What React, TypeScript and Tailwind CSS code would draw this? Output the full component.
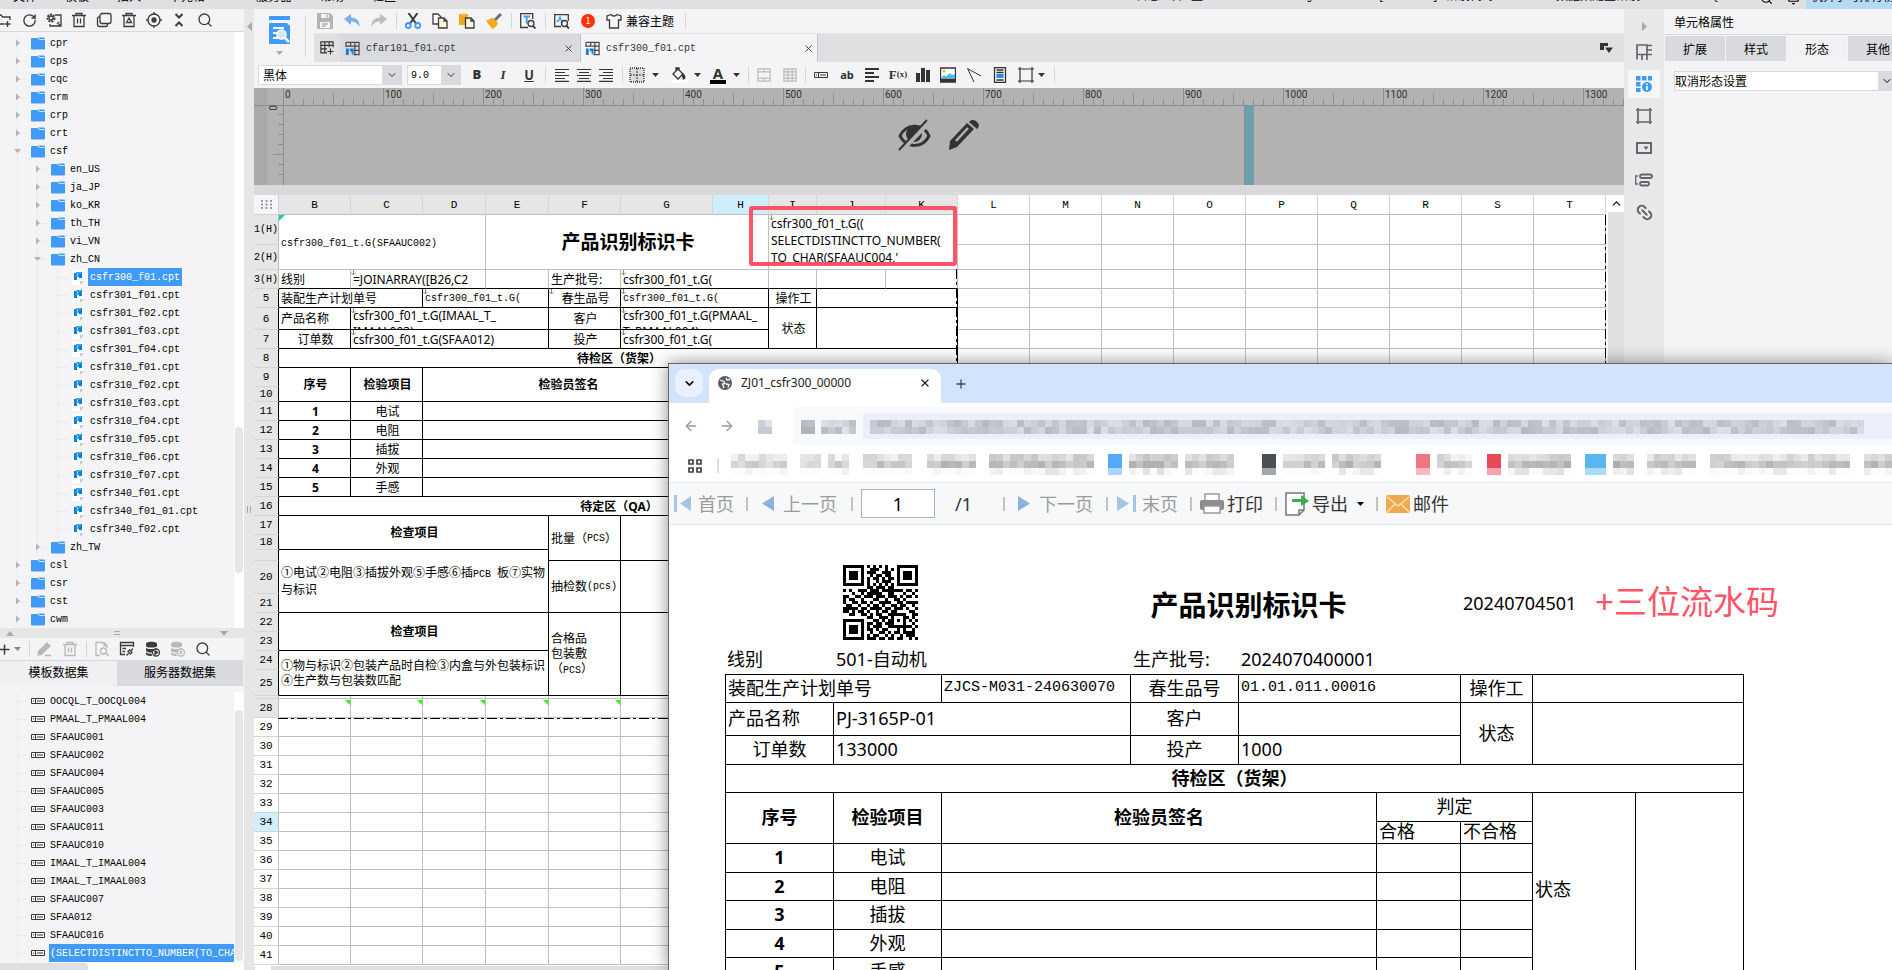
import React from 'react';
import {
  ArrowLeft,
  ArrowRight,
  Bell,
  ChevronDown,
  ChevronUp,
  Link2,
  Plus,
  RotateCw,
  Scissors,
  Search,
  Shirt,
  X,
} from 'lucide-react';

const MONO = "font-['Liberation_Mono','Noto_Sans_CJK_SC',monospace]";
const SANS = "font-['Noto_Sans','Noto_Sans_CJK_SC',sans-serif]";

interface IconProps {
  size?: number;
  box?: string;
  className?: string;
  children: React.ReactNode;
}

const Icon: React.FC<IconProps> = ({ size = 16, box = '0 0 16 16', className = '', children }) => (
  <svg width={size} height={size} viewBox={box} fill="none" stroke="currentColor" strokeWidth="1.3" className={`shrink-0 ${className}`}>
    {children}
  </svg>
);

const Tool: React.FC<{ label: string; className?: string; children: React.ReactNode }> = ({ label, className = '', children }) => (
  <button type="button" aria-label={label} className={`flex shrink-0 items-center justify-center ${className}`}>
    {children}
  </button>
);

const Caret: React.FC<{ className?: string }> = ({ className = '' }) => (
  <svg width="7" height="4" viewBox="0 0 7 4" className={`shrink-0 ${className}`}>
    <path d="M0 0h7L3.5 4z" fill="currentColor" />
  </svg>
);

const Sep: React.FC<{ className?: string }> = ({ className = '' }) => <span className={`w-px shrink-0 bg-[#d5d5d8] ${className}`} />;

/* ---------- left: template tree ---------- */

interface TreeNode {
  name: string;
  level: number;
  open?: boolean;
}

const files = [
  'csfr300_f01', 'csfr301_f01', 'csfr301_f02', 'csfr301_f03', 'csfr301_f04', 'csfr310_f01', 'csfr310_f02', 'csfr310_f03',
  'csfr310_f04', 'csfr310_f05', 'csfr310_f06', 'csfr310_f07', 'csfr340_f01', 'csfr340_f01_01', 'csfr340_f02',
];

const tree: TreeNode[] = [
  ...['cpr', 'cps', 'cqc', 'crm', 'crp', 'crt'].map(name => ({ name, level: 1 })),
  { name: 'csf', level: 1, open: true },
  ...['en_US', 'ja_JP', 'ko_KR', 'th_TH', 'vi_VN'].map(name => ({ name, level: 2 })),
  { name: 'zh_CN', level: 2, open: true },
  ...files.map(f => ({ name: `${f}.cpt`, level: 3 })),
  { name: 'zh_TW', level: 2 },
  ...['csl', 'csr', 'cst', 'cwm'].map(name => ({ name, level: 1 })),
];

const fields = [
  'OOCQL_T_OOCQL004', 'PMAAL_T_PMAAL004', 'SFAAUC001', 'SFAAUC002', 'SFAAUC004', 'SFAAUC005', 'SFAAUC003', 'SFAAUC011',
  'SFAAUC010', 'IMAAL_T_IMAAL004', 'IMAAL_T_IMAAL003', 'SFAAUC007', 'SFAA012', 'SFAAUC016', '(SELECTDISTINCTTO_NUMBER(TO_CHAR',
];

const Guide: React.FC<{ kind: 'line' | 'leaf' | 'closed' | 'open' }> = ({ kind }) => (
  <svg width="20" height="18" viewBox="0 0 20 18" className="shrink-0">
    <path d={kind === 'line' ? 'M6.500 0v18' : 'M6.500 0v18M7 9.500h9'} stroke="#ebebee" />
    {kind === 'closed' && <path d="M5 5.500v7l4-3.500z" fill="#b4b4b4" />}
    {kind === 'open' && <path d="M3 7h7l-3.500 4z" fill="#b4b4b4" />}
  </svg>
);

const Folder = () => (
  <svg width="14" height="13" viewBox="0 0 14 13" className="shrink-0">
    <path d="M1 1h5.500l1.500 2h6v8.500a1 1 0 0 1-1 1H1a1 1 0 0 1-1-1V2a1 1 0 0 1 1-1z" fill="#409bf8" />
    <path d="M7 .5h6a1 1 0 0 1 1 1V3H8z" fill="#409bf8" />
    <path d="M7.500 1l1.200 1.500H14" stroke="#e6f1fd" strokeWidth=".8" fill="none" />
  </svg>
);

const FileIcon = () => (
  <svg width="12" height="15" viewBox="0 0 12 15" className="shrink-0">
    <path d="M0 0h12v11l-4 4H0z" fill="#fff" />
    <path d="M12 11H8v4z" fill="#c9c9cc" />
    <path d="M2 3h3v7H2zM6 2h4v6H7V6H6z" fill="#0a7fe0" />
    <path d="M4 2h5v2H4zM4 5h3v2H4z" fill="#35a8ee" />
  </svg>
);

const FieldIcon = () => (
  <svg width="14" height="6" viewBox="0 0 14 6" className="shrink-0">
    <path d="M.5.5h13v5H.5zM4.500.5v5M6 3h6M2 3h1" stroke="#3a3a3a" fill="none" />
  </svg>
);

const TreeRow: React.FC<{ node: TreeNode }> = ({ node }) => {
  const selected = node.name === 'csfr300_f01.cpt';
  return (
    <li className="flex h-[18px] items-center pl-[11px]">
      {node.level > 1 && <Guide kind="line" />}
      {node.level > 2 && <Guide kind="line" />}
      <Guide kind={node.level === 3 ? 'leaf' : node.open ? 'open' : 'closed'} />
      {node.level === 3 ? <span className="ml-px"><FileIcon /></span> : <Folder />}
      <span className={`h-[18px] whitespace-nowrap px-[2px] leading-5 ${node.level === 3 ? 'ml-1' : 'ml-[3px]'} ${selected ? 'bg-[#409bf8] text-white' : 'text-black'}`}>
        {node.name}
      </span>
    </li>
  );
};

const LeftPanel = () => (
  <aside className={`flex w-[244px] shrink-0 flex-col overflow-hidden bg-[#f4f4f7] text-[10px] ${MONO}`}>
    <div className="flex h-[23px] shrink-0 items-center gap-[9px] border-b border-[#d9d9dc] text-[#3c3c3c]">
      <Tool label="新建文件夹" className="-ml-1 w-4"><Icon><path d="M1 3h4l1.500 2H14v3M1 3v9h7M11.500 9v6M8.500 12h6" /></Icon></Tool>
      <Tool label="刷新" className="w-4"><RotateCw size={15} strokeWidth={2.2} /></Tool>
      <Tool label="设置" className="w-4">
        <Icon><path d="M9 3h6v11H4v-2M11 12l2-2M12 14l2-2" /><circle cx="5" cy="6" r="3.500" strokeDasharray="2 1" strokeWidth="2" /><circle cx="5" cy="6" r="2" /></Icon>
      </Tool>
      <Tool label="删除" className="w-4"><Icon><path d="M1 3.500h14M5 3V1.500h6V3M3 3.500v11h10v-11M6.500 6.500v5M9.500 6.500v5" /></Icon></Tool>
      <Tool label="复制" className="w-4"><Icon><rect x="4" y="1.500" width="11" height="10" rx="2" /><path d="M4 5H3a1.500 1.500 0 0 0-1.500 1.500v6A2 2 0 0 0 3.500 14.500h6a2 2 0 0 0 2-2v-1" /></Icon></Tool>
      <Tool label="回收站" className="w-4"><Icon><path d="M1 3.500h14M5 3V1.500h6V3M3 3.500v11h10v-11M8 6l2.500 4.500h-5z" /></Icon></Tool>
      <Tool label="定位" className="w-4"><Icon><circle cx="8" cy="8" r="6" /><circle cx="8" cy="8" r="2" fill="currentColor" /><path d="M8 0v2.500M8 13.500V16M0 8h2.500M13.500 8H16" /></Icon></Tool>
      <Tool label="折叠" className="w-4"><Icon><path d="M4.500 2L8 5.500 11.500 2M4.500 14L8 10.500l3.500 3.500" strokeWidth="2" /></Icon></Tool>
      <Tool label="搜索" className="ml-px w-4"><Search size={16} strokeWidth={2} /></Tool>
    </div>

    <div className="flex h-[596px] shrink-0">
      <ul className="min-w-0 flex-1 pt-[2px]">
        {tree.map(n => <TreeRow key={n.name} node={n} />)}
      </ul>
      <div className="w-[10px] bg-white px-px pt-[395px]"><div className="h-[146px] rounded bg-[#e6e6e6]" /></div>
    </div>

    <div className="flex h-[10px] shrink-0 items-center justify-between bg-[#e6e6e6] px-[6px] text-[#ababab]">
      <svg width="8" height="5" viewBox="0 0 8 5"><path d="M0 5h8L4 0z" fill="currentColor" /></svg>
      <svg width="6" height="4" viewBox="0 0 6 4"><path d="M0 .5h6M0 3.500h6" stroke="currentColor" /></svg>
      <svg width="8" height="5" viewBox="0 0 8 5" className="mr-[10px]"><path d="M0 0h8L4 5z" fill="currentColor" /></svg>
    </div>

    <div className="flex h-[23px] shrink-0 items-center border-b border-[#d9d9dc] text-[#3c3c3c]">
      <Tool label="新增" className="w-[21px] gap-[2px]"><Plus size={15} strokeWidth={2.4} className="-ml-1 shrink-0" /><Caret className="text-[#8a8a8a]" /></Tool>
      <Sep className="ml-2 mr-[7px] h-4" />
      <Tool label="编辑" className="w-4 text-[#b9b9b9]"><Icon><path d="M1.500 10.500L10 2l3 3-8.500 8.500-3.500.5zM8 14.500h6" fill="currentColor" /></Icon></Tool>
      <Tool label="删除数据集" className="ml-[9px] w-4 text-[#b9b9b9]"><Icon><path d="M1 3.500h14M5 3V1.500h6V3M3 3.500v11h10v-11M6.500 6.500v5M9.500 6.500v5" /></Icon></Tool>
      <Sep className="ml-2 mr-[7px] h-4" />
      <Tool label="预览" className="w-4 text-[#b9b9b9]"><Icon><path d="M6 14.500H2v-13h8l3 3V7M10 1.500v3h3" /><circle cx="9.500" cy="10" r="3" /><path d="M11.500 12l3 3" /></Icon></Tool>
      <Tool label="连接" className="ml-[9px] w-4"><Icon><path d="M6 13.500H1.500v-12h13V6M1.500 4.500h13M3.500 7.500H7M3.500 10.500H6" /><path d="M7.500 14.500l2-2M9 10.500l2.500 2.500 1.500-1.500-2.500-2.500zM12 9.500l2-2" /></Icon></Tool>
      <Tool label="数据源" className="ml-[10px] w-4"><Icon><path d="M1 3c0-3 11-3 11 0v2c0 2-11 2-11 0zM1 6.500c0 2 11 2 11 0V8L7 11.500c-3 0-6-.5-6-2zM1 11c0 1 3 2 5.500 1.500L7 15c-3 0-6-.5-6-2z" fill="currentColor" stroke="none" /><circle cx="11" cy="11.500" r="3.500" fill="#f4f4f7" /><path d="M10 9.800v3.400l2.500-1.700z" fill="currentColor" /></Icon></Tool>
      <Tool label="移除数据源" className="ml-[9px] w-4 text-[#b9b9b9]"><Icon><path d="M1 3c0-3 11-3 11 0v2c0 2-11 2-11 0zM1 6.500c0 2 11 2 11 0V8L7 11.500c-3 0-6-.5-6-2zM1 11c0 1 3 2 5.500 1.500L7 15c-3 0-6-.5-6-2z" fill="currentColor" stroke="none" /><circle cx="11" cy="11.500" r="3.500" fill="#f4f4f7" /><path d="M9.800 10.300l2.400 2.400M12.200 10.300l-2.400 2.400" /></Icon></Tool>
      <Tool label="搜索数据集" className="ml-[9px] w-4"><Search size={16} strokeWidth={2} /></Tool>
    </div>

    <div className="flex h-[25px] shrink-0 text-xs text-black">
      <button type="button" className="w-[117px] bg-[#f0f0f2]">模板数据集</button>
      <button type="button" className="flex-1 border-r border-[#f4f4f7] bg-[#d9dade]">服务器数据集</button>
    </div>

    <div className="mt-[6px] flex h-[270px] shrink-0">
      <ul className="min-w-0 flex-1 overflow-hidden">
        {fields.map((f, i) => (
          <li key={f} className="flex h-[18px] items-center pl-[11px]">
            <Guide kind="leaf" />
            <FieldIcon />
            <span className={`ml-1 h-[18px] whitespace-nowrap pl-px leading-5 ${i === fields.length - 1 ? 'bg-[#409bf8] pl-[3px] text-white' : 'text-black'}`}>{f}</span>
          </li>
        ))}
      </ul>
      <div className="w-[10px] bg-white px-px pt-[18px]"><div className="h-[251px] rounded bg-[#e6e6e6]" /></div>
    </div>
    <div className="mt-px flex-1 bg-white"><div className="h-full w-[88px] rounded-tr bg-[#e0e0e2]" /></div>
  </aside>
);

/* ---------- centre: toolbars ---------- */

const TabIcon = () => (
  <Icon size={15} className="text-[#4a4a4a]">
    <path d="M1 1.500h14v13H9M1 1.500v5M6 1.500v4M10.500 1.500v13M1 5.500h14M8 10h7" />
    <path d="M1 8h3v7H1zM5 8h4v6H7v-3H5z" fill="#1a7fd0" stroke="none" />
  </Icon>
);

const MainToolbar = () => (
  <div className="flex h-[25px] items-center gap-[11px] border-b border-[#e4e4e6] pl-[3px] text-[#3c3c3c]">
    <Tool label="保存" className="w-4"><Icon className="text-[#b4b4b4]"><path d="M0 0h13l3 3v13H0z" fill="currentColor" stroke="none" /><path d="M4 1h8v4H4zM3 9h10v6H3z" fill="#f4f4f7" stroke="none" /><path d="M10 1.500v3M5 11h6M5 13h4" strokeWidth="1.500" /></Icon></Tool>
    <Tool label="撤销" className="w-4"><Icon><path d="M0 6l7-5v3.500c5 0 9 3 8.500 9.500C14 10.500 11 8.500 7 8.500V12z" fill="#77b1ee" stroke="none" /></Icon></Tool>
    <Tool label="重做" className="w-4"><Icon><path d="M16 6L9 1v3.500C4 4.500 0 7.500.5 14 2 10.500 5 8.500 9 8.500V12z" fill="#bdbdbd" stroke="none" /></Icon></Tool>
    <Sep className="-ml-[2px] -mr-[3px] h-4" />
    <Tool label="剪切" className="w-4"><Icon><path d="M3.500 0L11 10.500M12.500 0L5 10.500" strokeWidth="2" /><circle cx="3.200" cy="12.500" r="2.500" stroke="#409bf8" strokeWidth="1.800" /><circle cx="12.800" cy="12.500" r="2.500" stroke="#409bf8" strokeWidth="1.800" /></Icon></Tool>
    <Tool label="复制" className="w-4"><Icon><path d="M1 1h5l3 3v7H1z" fill="#fff" /><path d="M6.500 5H12l3 3v7H6.500z" fill="#fdf5dc" /><path d="M12 5v3h3" /></Icon></Tool>
    <Tool label="粘贴" className="w-4"><Icon><path d="M0 1h9v11H0z" fill="#f0a91b" stroke="none" /><path d="M2.500 0h4v2h-4z" fill="#f5d48a" stroke="none" /><path d="M6.500 5H12l3 3v7H6.500z" fill="#fdf5dc" /><path d="M12 5v3h3" /></Icon></Tool>
    <Tool label="格式刷" className="w-4"><Icon><path d="M0 7c3 1 4-2 7-2l5 5c-1 3-3 5-6 6-1-3-4-4-6-9z" fill="#f5ab17" stroke="none" /><path d="M9 7l6-6" stroke="#6e7078" strokeWidth="3" /></Icon></Tool>
    <Sep className="-ml-[2px] -mr-[3px] h-4" />
    <Tool label="查找" className="w-4"><Icon><path d="M8 14.500H.7V.7h12V6" /><path d="M3.500 3.500h6.500M6.700 3.500v7" stroke="#409bf8" strokeWidth="1.800" /><circle cx="11" cy="10.500" r="3" /><path d="M13 13l2.500 2.500" strokeWidth="1.800" /></Icon></Tool>
    <Sep className="-ml-[2px] -mr-[3px] h-4" />
    <Tool label="性能检测" className="w-4"><Icon><path d="M7 13.500H.7V1.700h13.600V8" /><path d="M2.500 8h2l1.500-4 2 6 1.500-3" stroke="#409bf8" /><circle cx="10.500" cy="10.500" r="3" /><path d="M12.500 13l2.500 2.500" strokeWidth="1.800" /></Icon></Tool>
    <span className="flex h-[14px] w-[14px] items-center justify-center rounded-full bg-[#ff3300] text-[9px] text-white">1</span>
    <button type="button" className="flex items-center gap-1 text-xs text-black">
      <Icon className="text-[#3c3c3c]"><path d="M5 1.500L1 3v4h2.500v8h9V7H15V3l-4-1.500c-1 2-5 2-6 0z" /></Icon>兼容主题
    </button>
    <Sep className="h-4" />
  </div>
);

const TabBar = () => (
  <div className={`flex h-7 items-stretch bg-[#e0e0e2] text-[10px] text-[#333] ${MONO}`}>
    <Tool label="新建模板" className="w-[26px]"><Icon size={14}><path d="M8 13.500H1V1h14v6M1 5h14M1 9h7M5.500 1v12.500M10.500 1v6M12 8.500v7M8.500 12h7" /></Icon></Tool>
    <div className="flex w-[241px] items-center border-r border-[#c4c4c8] bg-[#d9dade] pl-[5px] pr-[6px]">
      <TabIcon /><span className="ml-[6px] flex-1">cfar101_f01.cpt</span><Tool label="关闭"><X size={11} strokeWidth={2} /></Tool>
    </div>
    <div className="flex w-[237px] items-center border-r border-[#c4c4c8] bg-[#f4f4f7] pl-1 pr-[3px]">
      <TabIcon /><span className="ml-[6px] flex-1">csfr300_f01.cpt</span><Tool label="关闭"><X size={11} strokeWidth={2} /></Tool>
    </div>
    <div className="flex flex-1 items-center justify-end pr-[11px]">
      <Tool label="标签列表"><svg width="13" height="11" viewBox="0 0 13 11"><path d="M0 0h8v3H4v4H0z" fill="#333" /><path d="M5 4.500h8L9 10z" fill="#333" /></svg></Tool>
    </div>
  </div>
);

const AlignIcon: React.FC<{ d: string }> = ({ d }) => <Icon size={14} box="0 0 14 14"><path d={d} strokeWidth="1.200" /></Icon>;

const FormatBar = () => (
  <div className="flex h-[26px] items-center bg-[#f4f4f7] pl-1 text-[#333]">
    <label className="relative flex h-5 w-[144px] shrink-0 border border-[#d9dade] bg-white">
      <select aria-label="字体" className="w-full appearance-none pl-1 text-xs text-black"><option>黑体</option></select>
      <span className="pointer-events-none absolute inset-y-0 right-0 flex w-[19px] items-center justify-center bg-[#d9dade]"><ChevronDown size={12} /></span>
    </label>
    <label className="relative ml-[5px] flex h-5 w-[54px] shrink-0 border border-[#d9dade] bg-white">
      <select aria-label="字号" className={`w-full appearance-none pl-[3px] text-[10px] text-black ${MONO}`}><option>9.0</option></select>
      <span className="pointer-events-none absolute inset-y-0 right-0 flex w-[19px] items-center justify-center bg-[#d9dade]"><ChevronDown size={12} /></span>
    </label>
    <Tool label="加粗" className="ml-2 w-4 text-[13px] font-black"><b className={SANS}>B</b></Tool>
    <Tool label="斜体" className="ml-[10px] w-4 font-['Liberation_Serif',serif] text-[13px]"><b><i>I</i></b></Tool>
    <Tool label="下划线" className="ml-[10px] w-4 text-[13px]"><b className="underline">U</b></Tool>
    <Sep className="ml-2 mr-[9px] h-4" />
    <Tool label="左对齐"><AlignIcon d="M0 1.500h14M0 4.500h10M0 7.500h14M0 10.500h10M0 13.400h14" /></Tool>
    <Tool label="居中" className="ml-2"><AlignIcon d="M0 1.500h14M2 4.500h10M0 7.500h14M2 10.500h10M0 13.400h14" /></Tool>
    <Tool label="右对齐" className="ml-2"><AlignIcon d="M0 1.500h14M4 4.500h10M0 7.500h14M4 10.500h10M0 13.400h14" /></Tool>
    <Sep className="ml-[9px] mr-[6px] h-4" />
    <Tool label="边框" className="gap-[7px]"><Icon><path d="M1 1h14v14H1z" fill="#dcdcde" strokeDasharray="1 1" /><path d="M8 1v14M1 8h14" strokeDasharray="2 1" strokeWidth="1" /></Icon><Caret /></Tool>
    <Tool label="填充" className="ml-3 gap-[7px]"><Icon><path d="M2 7l5-5 5 5-5 5zM5 4V1h3v3" /><path d="M12 7c2 2 2.500 3 1.500 4.500S11 10 12 7z" fill="currentColor" /><path d="M0 13h16v3H0z" fill="#fff" stroke="none" /></Icon><Caret /></Tool>
    <Tool label="字色" className="ml-[9px] gap-[7px]"><span className={`flex w-4 flex-col items-center border-b-4 border-black text-[15px] font-bold leading-[13px] ${SANS}`}>A</span><Caret /></Tool>
    <Sep className="ml-2 mr-2 h-4" />
    <Tool label="合并" className="text-[#b9b9b9]"><Icon size={14}><path d="M1 1h14v14H1zM1 4.500h14M1 11.500h14M8 1v3M8 12v3" /></Icon></Tool>
    <Tool label="拆分" className="ml-3 text-[#b9b9b9]"><Icon size={14}><path d="M1 1h14v14H1zM1 4.500h14M1 8h14M1 11.500h14M5.500 1v14M10.500 1v14" /></Icon></Tool>
    <Sep className="ml-2 mr-2 h-4" />
    <Tool label="数据列"><FieldIcon /></Tool>
    <Tool label="文本" className={`ml-[11px] w-4 text-[11px] font-bold ${SANS}`}>ab</Tool>
    <Tool label="富文本" className="ml-[9px]"><Icon><path d="M1 2h14M1 6h9M1 10h14M1 14h9" strokeWidth="1.800" /></Icon></Tool>
    <Tool label="公式" className="ml-[9px] w-[18px] font-['Liberation_Serif',serif] text-[13px] font-bold">F<span className="text-[9px]">(x)</span></Tool>
    <Tool label="图表" className="ml-[8px]"><Icon><path d="M1 6h4v9H1zM6 1h4v14H6zM11 3h4v12h-4z" fill="currentColor" stroke="none" /></Icon></Tool>
    <Tool label="图片" className="ml-[9px]"><Icon><path d="M.5 1h15v14H.5z" fill="#fff" /><path d="M1 11l3-3 2 1.500L10 6l2 2 3-1v4z" fill="#3cc0f5" stroke="none" /><path d="M.5 11.500h15V15H.5z" fill="#333" stroke="none" /><circle cx="4" cy="4" r="1.500" fill="#f5b52a" stroke="none" /></Icon></Tool>
    <Tool label="斜线" className="ml-[10px]"><Icon><path d="M1.500 1.500L8 15M1.500 1.500L15 9" strokeWidth="1" /></Icon></Tool>
    <Tool label="子报表" className="ml-[10px]"><Icon><path d="M2.500.7h11v14.600h-11zM4.500 3h7M4.500 5.500h7M4.500 13h7" /><path d="M4.500 7h7v4h-7z" fill="#2a8ce0" stroke="none" /></Icon></Tool>
    <Tool label="悬浮元素" className="ml-[10px] gap-1"><Icon><path d="M2 2h12v12H2zM0 2h2V0M14 0v2h2M16 14h-2v2M2 16v-2H0" strokeWidth="1.200" /></Icon><Caret /></Tool>
    <Sep className="ml-[9px] h-4" />
  </div>
);

const RulerArea = () => {
  const ticks = Array.from({ length: 180 }, (_, i) => i);
  return (
    <div className="relative h-[97px] overflow-hidden bg-[#b2b2b2] text-[#333]">
      <svg width="100%" height="97" className="block" fontFamily="Roboto, sans-serif" fontSize="10">
        <rect x="0" y="0" width="13" height="97" fill="#a9a9a9" />
        <path d="M0 17.500h3000M29.500 0v97" stroke="#8c8c8c" />
        {ticks.map(i => (
          <line key={i} x1={29.5 + i * 10} x2={29.5 + i * 10} y1={i % 10 === 0 ? 0 : i % 5 === 0 ? 5 : 11} y2="17" stroke="#8f8f8f" />
        ))}
        {ticks.filter(i => i % 10 === 0).map(i => (
          <text key={i} x={31 + i * 10} y="10" fill="#333">{i * 10}</text>
        ))}
        {[1, 2, 3, 4, 5, 6, 7].map(i => (
          <line key={i} x1={i === 5 ? 19 : 24} x2="29" y1={16.5 + i * 10} y2={16.5 + i * 10} stroke="#8f8f8f" />
        ))}
        <text transform="translate(15 17) rotate(90)" fill="#333">0</text>
        <path d="M990.500 18v79" stroke="#8c8c8c" />
        <rect x="991" y="17" width="9" height="80" fill="#6e9fab" />
        <g transform="translate(644 32)">
          <path d="M2 16c5-12 23-14 29 0-6 12-22 13-29 0z" stroke="#333" strokeWidth="3" fill="none" />
          <circle cx="16" cy="14" r="8" fill="#333" />
          <path d="M3 31L32 1" stroke="#b2b2b2" strokeWidth="5" />
          <path d="M1 30L29 0" stroke="#333" strokeWidth="2" />
        </g>
        <g transform="translate(695 32)">
          <path d="M0 30l1-9L18 3l7 6L8 27z" fill="#333" />
          <path d="M7 21L19 8" stroke="#b2b2b2" strokeWidth="2.500" />
          <path d="M20 2c3-3 6-2 8 0s3 4 0 7z" fill="#333" />
        </g>
      </svg>
    </div>
  );
};

/* ---------- centre: spreadsheet ---------- */

interface Cell {
  t?: React.ReactNode;
  cs?: number;
  rs?: number;
  c?: string;
  mark?: boolean;
}

interface Row {
  n: string;
  h: number;
  cells: Cell[];
}

const K = 'border-black';
const MID = 'border-black justify-center';
const BOLD = 'border-black justify-center font-bold';
const G = 'border-[#bfbfbf]';
const TOP = 'border-b-black border-r-[#bfbfbf]';
const code = (s: string) => <span className={`text-[10px] ${MONO}`}>{s}</span>;

const checks = ['电试', '电阻', '插拔', '外观', '手感'];

const designRows: Row[] = [
  {
    n: '1(H)', h: 30, cells: [
      { t: <span className={`pt-[2px] text-[10px] ${MONO}`}>csfr300_f01_t.G(SFAAUC002)</span>, cs: 3, rs: 2, c: G },
      { t: '产品识别标识卡', cs: 4, rs: 2, c: `${G} justify-center text-[19px] font-bold` },
      { t: <span className="self-start leading-[17px]">csfr300_f01_t.G((<br />SELECTDISTINCTTO_NUMBER(<br />TO_CHAR(SFAAUC004,'</span>, cs: 3, rs: 2, c: G, mark: true },
    ],
  },
  { n: '2(H)', h: 25, cells: [] },
  {
    n: '3(H)', h: 19, cells: [
      { t: '线别', c: TOP },
      { t: '=JOINARRAY([B26,C2', cs: 2, c: TOP, mark: true },
      { c: TOP },
      { t: '生产批号:', c: TOP },
      { t: 'csfr300_f01_t.G(', cs: 2, c: TOP, mark: true },
      { c: TOP }, { c: TOP }, { c: TOP },
    ],
  },
  {
    n: '5', h: 19, cells: [
      { t: '装配生产计划单号', cs: 2, c: K },
      { t: code('csfr300_f01_t.G('), cs: 2, c: K, mark: true },
      { t: '春生品号', c: MID, mark: true },
      { t: code('csfr300_f01_t.G('), cs: 2, c: K, mark: true },
      { t: '操作工', c: MID }, { cs: 2, c: K },
    ],
  },
  {
    n: '6', h: 22, cells: [
      { t: '产品名称', c: K },
      { t: <span className="self-start leading-4">csfr300_f01_t.G(IMAAL_T_<br />IMAAL003)</span>, cs: 3, c: K, mark: true },
      { t: '客户', c: MID },
      { t: <span className="self-start leading-4">csfr300_f01_t.G(PMAAL_<br />T_PMAAL004)</span>, cs: 2, c: K, mark: true },
      { t: '状态', rs: 2, c: MID }, { cs: 2, rs: 2, c: K },
    ],
  },
  {
    n: '7', h: 19, cells: [
      { t: '订单数', c: MID },
      { t: 'csfr300_f01_t.G(SFAA012)', cs: 3, c: K, mark: true },
      { t: '投产', c: MID },
      { t: 'csfr300_f01_t.G(', cs: 2, c: K, mark: true },
    ],
  },
  { n: '8', h: 19, cells: [{ t: '待检区（货架）', cs: 10, c: BOLD }] },
  { n: '9', h: 19, cells: [{ t: '序号', rs: 2, c: BOLD }, { t: '检验项目', rs: 2, c: BOLD }, { t: '检验员签名', cs: 4, rs: 2, c: BOLD }, { cs: 4, rs: 2, c: K }] },
  { n: '10', h: 15, cells: [] },
  ...checks.map((t, i) => ({ n: String(11 + i), h: 19, cells: [{ t: i + 1, c: `${MID} font-bold` }, { t, c: MID }, { cs: 4, c: K }, { cs: 4, c: K }] })),
  { n: '16', h: 19, cells: [{ t: '待定区（QA）', cs: 10, c: BOLD }] },
  { n: '17', h: 19, cells: [{ t: '检查项目', cs: 4, rs: 2, c: BOLD }, { t: <>批量（{code('PCS')}）</>, rs: 3, c: K }, { cs: 5, rs: 3, c: K }] },
  { n: '18', h: 15, cells: [] },
  { n: '', h: 11, cells: [{ t: <span className="leading-[15px]">①电试②电阻③插拔外观⑤手感⑥插{code('PCB ')}板⑦实物与标识</span>, cs: 4, rs: 3, c: K }] },
  { n: '20', h: 33, cells: [{ t: <>抽检数{code('(pcs)')}</>, rs: 2, c: K }, { cs: 5, rs: 2, c: K }] },
  { n: '21', h: 19, cells: [] },
  { n: '22', h: 19, cells: [{ t: '检查项目', cs: 4, rs: 2, c: BOLD }, { t: <span className="leading-[15px]">合格品<br />包装敷<br />（{code('PCS')}）</span>, rs: 4, c: K }, { cs: 5, rs: 4, c: K }] },
  { n: '23', h: 19, cells: [] },
  { n: '24', h: 19, cells: [{ t: <span className="leading-[15px]">①物与标识②包装产品时自检③内盒与外包装标识④生产数与包装数匹配</span>, cs: 4, rs: 2, c: K }] },
  { n: '25', h: 26, cells: [] },
];

const emptyRow = (n: string, h: number): Row => ({ n, h, cells: Array.from({ length: 10 }, () => ({ c: G })) });
const allRows: Row[] = [
  ...designRows,
  emptyRow('gap', 3),
  ...Array.from({ length: 14 }, (_, i) => emptyRow(String(28 + i), 19)),
];

const columns: [string, number][] = [
  ['B', 72], ['C', 72], ['D', 63], ['E', 63], ['F', 72], ['G', 92], ['H', 56], ['I', 48], ['J', 69], ['K', 72],
  ...'LMNOPQRST'.split('').map(l => [l, 72] as [string, number]),
];

const headerTone = (letter: string) => (letter === 'H' ? 'bg-[#cfeefb]' : letter < 'L' ? 'bg-[#e6e6e6]' : 'bg-white');

const Marker = () => (
  <svg width="5" height="6" viewBox="0 0 5 6" className="absolute left-0 top-0"><path d="M2.500 0v5M0 2.500L2.500 5 5 2.500" stroke="#888" fill="none" /></svg>
);

const Sheet = () => (
  <div className="relative min-w-0 flex-1 overflow-hidden bg-white">
    <table className={`w-[1352px] table-fixed border-separate border-spacing-0 text-xs text-black ${SANS}`}>
      <colgroup>
        <col className="w-[25px]" />
        {columns.map(([l, w]) => <col key={l} style={{ width: w }} />)}
      </colgroup>
      <thead>
        <tr className={`h-5 ${MONO}`}>
          <th className="border-b border-r border-b-[#d0d0d4] border-r-[#d0d0d4] bg-[#f6f6fa] p-0">
            <svg width="11" height="9" viewBox="0 0 11 9" className="mx-auto text-[#999]"><path d="M0 1h2M4.500 1h2M9 1h2M0 4.500h2M4.500 4.500h2M9 4.500h2M0 8h2M4.500 8h2M9 8h2" stroke="currentColor" strokeWidth="2" /></svg>
          </th>
          {columns.map(([l]) => (
            <th key={l} className={`border-b border-r border-b-[#bfbfbf] border-r-[#d5d5d9] px-0 pb-0 pt-[2px] text-[11px] font-normal leading-[17px] ${headerTone(l)}`}>{l}</th>
          ))}
        </tr>
      </thead>
      <tbody>
        {allRows.map((row, i) => {
          const num = parseInt(row.n, 10);
          const black = i >= 3 && i < designRows.length;
          return (
            <tr key={row.n + i} style={{ height: row.h }}>
              <th className={`whitespace-nowrap border-b border-r border-b-[#d5d5d9] p-0 text-center font-normal leading-none ${i < 3 ? 'text-[10px]' : 'text-[11px]'} ${MONO} ${black ? 'border-r-black' : 'border-r-[#bfbfbf]'} ${num === 34 ? 'bg-[#cfeefb]' : num > 28 ? 'bg-white' : 'bg-[#e6e6e6]'}`}>
                <div className="flex items-center justify-center overflow-hidden pt-px" style={{ height: row.h - 1 }}>{row.n === 'gap' ? '' : row.n}</div>
              </th>
              {row.cells.map((cell, j) => {
                const h = allRows.slice(i, i + (cell.rs ?? 1)).reduce((sum, r) => sum + r.h, 0);
                const tone = cell.c ?? G;
                return (
                  <td key={j} colSpan={cell.cs} rowSpan={cell.rs} className={`relative border-b border-r p-0 ${tone}`}>
                    {cell.mark && <Marker />}
                    <div className={`flex items-center overflow-hidden pl-[2px] leading-[17px] ${tone}`} style={{ height: h - 1 }}>{cell.t}</div>
                    {num === 28 && <svg width="5" height="5" viewBox="0 0 5 5" className="absolute right-0 top-px"><path d="M0 0h5v5z" fill="#2bf500" /></svg>}
                  </td>
                );
              })}
              {Array.from({ length: 9 }, (_, j) => <td key={`x${j}`} className="border-b border-r border-[#bfbfbf] p-0" />)}
            </tr>
          );
        })}
      </tbody>
    </table>
    <div className="mt-px h-[5px] bg-[#e0e0e2] pl-[1px]"><div className="h-full w-4 bg-white" /></div>
    {/* page break guides */}
    <svg className="pointer-events-none absolute left-0 top-0 h-full w-full" fill="none" stroke="#000" strokeDasharray="10 3 3 3">
      <path d="M24 523.500h679M702.500 74v450M1351.500 20v504" />
    </svg>
    <svg width="6" height="6" viewBox="0 0 6 6" className="absolute left-[25px] top-5"><path d="M0 0h6L0 6z" fill="#19d3a2" /></svg>
    <div className="absolute left-[495px] top-[11px] h-[60px] w-[208px] rounded-[3px] border-4 border-[#ff5468]" />
  </div>
);

/* ---------- right: cell attributes ---------- */

const RightPanel = () => (
  <div className="flex w-[268px] shrink-0">
    <nav className="flex w-10 flex-col items-center bg-[#e8e8e8] text-[#62646e]">
      <svg width="5" height="9" viewBox="0 0 5 9" className="mt-[13px]"><path d="M0 0v9l5-4.500z" fill="#a8a8a8" /></svg>
      <Tool label="单元格元素" className="mt-[7px] h-7 w-8"><Icon><path d="M1 15.500V1h10v9.500H1M11 1.500h5M11 6h5M11 10.500h5M6 11v5M11 11v5" strokeWidth="1.700" /></Icon></Tool>
      <Tool label="单元格属性" className="mt-1 h-7 w-8 bg-[#f6f6f9]"><Icon><path d="M0 0h4.500v4.500H0zM6 0h4.500v4.500H6zM12 0h4v4.500h-4zM0 6h4.500v4.500H0zM0 12h4.500v4H0z" fill="#409bf8" stroke="none" /><circle cx="11" cy="11" r="5" fill="#409bf8" stroke="none" /><path d="M11 7.500v1.500M11 10v4" stroke="#fff" strokeWidth="1.600" /></Icon></Tool>
      <Tool label="悬浮元素" className="mt-1 h-7 w-8"><Icon><path d="M2 2h12v12H2zM0 2h2V0M14 0v2h2M16 14h-2v2M2 16v-2H0" strokeWidth="1.700" /></Icon></Tool>
      <Tool label="控件设置" className="mt-1 h-7 w-8"><Icon><rect x="1" y="3" width="14" height="10" strokeWidth="2" /><path d="M7.500 6.500h5l-2.500 3.500z" fill="currentColor" stroke="none" /></Icon></Tool>
      <Tool label="条件属性" className="mt-1 h-7 w-8"><Icon size={18} box="0 0 18 16"><path d="M3 4H.7v8H3" /><rect x="5" y="2.500" width="12" height="3.500" rx="1.700" strokeWidth="1.800" /><rect x="5" y="10" width="9" height="3.500" rx="1.500" strokeWidth="1.800" /></Icon></Tool>
      <Tool label="超级链接" className="mt-1 h-7 w-8"><Link2 size={19} strokeWidth={2.6} className="rotate-45" /></Tool>
    </nav>
    <section className="min-w-0 flex-1 overflow-hidden bg-[#f4f4f7] text-xs text-black">
      <h2 className="h-[26px] border-b border-[#d9d9dc] pl-[10px] leading-[26px]">单元格属性</h2>
      <div className="flex h-[26px] gap-px pl-px pt-px">
        <button type="button" className="w-[60px] shrink-0 bg-[#d9dade]">扩展</button>
        <button type="button" className="w-[60px] shrink-0 bg-[#d9dade]">样式</button>
        <button type="button" className="w-[60px] shrink-0 bg-[#f2f2f4]">形态</button>
        <button type="button" className="w-[60px] shrink-0 bg-[#d9dade]">其他</button>
      </div>
      <label className="relative ml-[10px] mt-[10px] flex h-5 border border-r-0 border-[#d9dade] bg-white">
        <select aria-label="形态" className="w-full appearance-none"><option>取消形态设置</option></select>
        <span className="pointer-events-none absolute inset-y-0 right-0 flex w-[14px] items-center justify-center bg-[#d9dade]"><ChevronDown size={12} className="ml-1 shrink-0" /></span>
      </label>
    </section>
  </div>
);

/* ---------- browser preview window ---------- */

// Blocky censor strip: every segment is [x, width, base grey, optional colour].
type Segment = [number, number, number, string?];

const Mosaic: React.FC<{ segments: Segment[]; rows: number; className?: string; tint?: boolean }> = ({ segments, rows, className = '', tint }) => (
  <svg width="100%" height={rows * 7} className={`block ${className}`}>
    {segments.flatMap(([x, w, base, color], s) =>
      Array.from({ length: Math.round(w / 7) * rows }, (_, k) => {
        const col = Math.floor(k / rows);
        const r = k % rows;
        const seed = Math.abs(Math.sin(x * 12.9 + col * 78.2 + r * 37.7) * 43758.5) % 1;
        const lift = rows === 3 ? [24, 0, 52][r] : 0;
        const g = Math.min(252, Math.round(base + seed * 36 + lift));
        const fill = color ?? (tint ? `rgb(${g},${g + 4},${Math.min(255, g + 12)})` : `rgb(${g},${g},${g})`);
        return <rect key={`${s}-${k}`} x={x + col * 7} y={r * 7} width="7" height="7" fill={fill} opacity={color && r === 2 ? 0.5 : 1} />;
      })
    )}
  </svg>
);

const urlSegments: Segment[] = [[89, 14, 195], [132, 14, 170], [152, 35, 185], [201, 994, 182]];
const bookmarkSegments: Segment[] = [
  [62, 56, 190], [131, 21, 195], [159, 21, 190], [194, 49, 185], [258, 49, 178], [320, 105, 175], [439, 14, 0, '#55a9fb'],
  [460, 49, 168], [516, 49, 175], [593, 14, 0, '#4a4f54'], [614, 42, 180], [663, 49, 175], [747, 14, 0, '#ee7683'], [768, 35, 185],
  [818, 14, 0, '#e84a5a'], [839, 63, 170], [916, 21, 0, '#58b8ee'], [944, 21, 172], [978, 49, 180], [1041, 140, 178], [1195, 28, 175],
];

const PageSep = () => <span className="h-[14px] w-[2px] shrink-0 bg-[#c2c2c4]" />;

const qr = [
  '1111111010101010001111111',
  '1000001001110010101000001',
  '1011101011100111001011101',
  '1011101001011011001011101',
  '1011101010110101101011101',
  '1000001010010111001000001',
  '1111111010101010101111111',
  '0000000011011101100000000',
  '1010011101110111111101101',
  '0001001011111001100010010',
  '1100110111011101110101101',
  '1011001000110010011010000',
  '1001101101001111001101111',
  '0110010010110100110110010',
  '1111101101111011011101001',
  '1101011010010110110000110',
  '0011001101011001111110011',
  '0000000011001110100011010',
  '1111111000110101101010101',
  '1000001011011011100010010',
  '1011101010111001111111101',
  '1011101011010110001010010',
  '1011101001001101011011110',
  '1000001010110010100101110',
  '1111111011101101101100101',
];

const QrCode = () => (
  <svg width="75" height="75" viewBox="0 0 25 25" shapeRendering="crispEdges" className="mx-auto block">
    {qr.flatMap((line, y) => line.split('').map((bit, x) => (bit === '1' ? <rect key={`${x}-${y}`} x={x} y={y} width="1" height="1" /> : null)))}
  </svg>
);

const RC = 'border-b border-r border-black px-[2px] pt-0 pb-[2px]';
const monoCell = `text-[15px] ${MONO}`;

const Report = () => (
  <div className={`relative flex-1 overflow-hidden bg-white pl-[56px] pt-[38px] text-lg leading-6 text-black ${SANS}`}>
    <table className="w-[1019px] table-fixed border-separate border-spacing-0">
      <colgroup>
        {[109, 108, 94, 95, 108, 138, 84, 72, 103, 108].map((w, i) => <col key={i} style={{ width: w }} />)}
      </colgroup>
      <tbody>
        <tr className="h-[83px]">
          <td colSpan={3} className="p-0 pb-1"><QrCode /></td>
          <td colSpan={4} className="p-0 text-center text-[28px] font-bold">产品识别标识卡</td>
          <td colSpan={3} className="whitespace-nowrap px-[2px] pb-1 pt-0">20240704501</td>
        </tr>
        <tr className="h-[29px]">
          <td className="border-b border-black px-[2px] pb-[2px] pt-0">线别</td>
          <td colSpan={3} className="border-b border-black px-[2px] pb-[2px] pt-0">501-自动机</td>
          <td className="whitespace-nowrap border-b border-black px-[2px] pb-[2px] pt-0">生产批号:</td>
          <td colSpan={5} className="border-b border-black px-[2px] pb-[2px] pt-0">2024070400001</td>
        </tr>
        <tr className="h-7">
          <td colSpan={2} className={`border-l ${RC}`}>装配生产计划单号</td>
          <td colSpan={2} className={`${RC} ${monoCell}`}>ZJCS-M031-240630070</td>
          <td className={`${RC} text-center`}>春生品号</td>
          <td colSpan={2} className={`${RC} ${monoCell}`}>01.01.011.00016</td>
          <td className={`${RC} text-center`}>操作工</td>
          <td colSpan={2} className={RC} />
        </tr>
        <tr className="h-[33px]">
          <td className={`border-l ${RC}`}>产品名称</td>
          <td colSpan={3} className={RC}>PJ-3165P-01</td>
          <td className={`${RC} text-center`}>客户</td>
          <td colSpan={2} className={RC} />
          <td rowSpan={2} className={`${RC} text-center`}>状态</td>
          <td rowSpan={2} colSpan={2} className={RC} />
        </tr>
        <tr className="h-[29px]">
          <td className={`border-l ${RC} text-center`}>订单数</td>
          <td colSpan={3} className={RC}>133000</td>
          <td className={`${RC} text-center`}>投产</td>
          <td colSpan={2} className={RC}>1000</td>
        </tr>
        <tr className="h-7">
          <td colSpan={10} className={`border-l ${RC} text-center font-bold`}>待检区（货架）</td>
        </tr>
        <tr className="h-[29px]">
          <th rowSpan={2} className={`border-l ${RC}`}>序号</th>
          <th rowSpan={2} className={RC}>检验项目</th>
          <th rowSpan={2} colSpan={4} className={RC}>检验员签名</th>
          <td colSpan={2} className={`${RC} text-center`}>判定</td>
          <td rowSpan={7} className={RC}>状态</td>
          <td rowSpan={7} className={RC} />
        </tr>
        <tr className="h-[22px] leading-[19px]">
          <td className={RC}>合格</td>
          <td className={RC}>不合格</td>
        </tr>
        {checks.map((t, i) => (
          <tr key={t} className={i % 2 ? 'h-7' : 'h-[29px]'}>
            <th className={`border-l ${RC}`}>{i + 1}</th>
            <td className={`${RC} text-center`}>{t}</td>
            <td colSpan={4} className={RC} />
            <td className={RC} />
            <td className={RC} />
          </tr>
        ))}
      </tbody>
    </table>
    <span className="absolute left-[926px] top-[54px] whitespace-nowrap text-[33px] leading-[46px] text-[#ff5468]">+三位流水码</span>
  </div>
);

const PreviewWindow = () => (
  <section className={`absolute bottom-0 left-[668px] right-0 top-[363px] flex flex-col overflow-hidden border-l border-t border-[#666] bg-white shadow-[0_0_16px_rgba(0,0,0,0.45)] ${SANS}`}>
    <div className="flex h-[39px] shrink-0 items-end bg-[#d3e2fd] pl-[6px]">
      <Tool label="搜索标签页" className="mb-[6px] h-7 w-7 rounded-[10px] bg-[#e9f1fe]"><ChevronDown size={13} strokeWidth={2.8} /></Tool>
      <div className="ml-[6px] flex h-[34px] w-[232px] items-center rounded-t-[10px] bg-white pb-[6px] pl-[9px] pr-[10px] text-[#222]">
        <svg width="14" height="14" viewBox="0 0 14 14"><circle cx="7" cy="7" r="7" fill="#5a5d61" /><path d="M2 4l4 1.500 1 2-2.500.5L6 12M8 2l1 2 3-.5M8 8l3 .5-1 3" stroke="#fff" strokeWidth="1.300" fill="none" /></svg>
        <span className="ml-[9px] flex-1 text-xs">ZJ01_csfr300_00000</span>
        <Tool label="关闭标签页"><X size={12} strokeWidth={2.5} /></Tool>
      </div>
      <Tool label="新建标签页" className="mb-3 ml-[13px] text-[#444]"><Plus size={14} strokeWidth={2.2} /></Tool>
    </div>

    <div className="relative flex h-[46px] shrink-0 items-center pl-[14px] text-[#9a9a9a]">
      <ArrowLeft size={16} className="shrink-0" />
      <ArrowRight size={16} className="ml-5 shrink-0" />
      <div className="ml-[58px] h-[38px] flex-1 bg-[#f8f9fd] py-[6px] pl-[70px]"><div className="h-[26px] bg-[#eaeff9]" /></div>
      <div className="absolute inset-x-0 top-[17px]"><Mosaic segments={urlSegments} rows={2} tint /></div>
    </div>

    <div className="relative flex h-[34px] shrink-0 items-center border-b border-[#e8eaed] pl-[19px] text-[#444]">
      <svg width="14" height="14" viewBox="0 0 14 14" fill="none" stroke="currentColor" strokeWidth="1.700"><path d="M1 1h4v4H1zM9 1h4v4H9zM1 9h4v4H1zM9 9h4v4H9z" /></svg>
      <span className="ml-[15px] h-[15px] w-[2px] bg-[#cfe0fb]" />
      <div className="absolute inset-x-0 top-[5px]"><Mosaic segments={bookmarkSegments} rows={3} /></div>
    </div>

    <div className="flex h-[42px] shrink-0 items-center border-b border-[#e2e5e8] bg-[#f6f8fa] pl-[5px] text-lg text-[#9b9b9b]">
      <button type="button" className="mr-3 flex items-center gap-[6px]"><svg width="18" height="17" viewBox="0 0 18 17"><path d="M0 0h3v17H0zM17 1v15L6 8.500z" fill="#a6c5e6" /></svg>首页</button>
      <PageSep />
      <button type="button" className="mx-[14px] flex items-center gap-[9px]"><svg width="12" height="17" viewBox="0 0 12 17"><path d="M12 1v15L0 8.500z" fill="#8ab3de" /></svg>上一页</button>
      <PageSep />
      <input aria-label="页码" defaultValue="1" className="ml-2 h-[29px] w-[74px] border border-[#a9b0c8] bg-white text-center text-black" />
      <span className="ml-5 mr-7 w-5 text-[#333]">/1</span>
      <PageSep />
      <button type="button" className="mx-[13px] flex items-center gap-[9px]"><svg width="12" height="17" viewBox="0 0 12 17"><path d="M0 1v15l12-7.500z" fill="#8ab3de" /></svg>下一页</button>
      <PageSep />
      <button type="button" className="ml-[9px] mr-3 flex items-center gap-[6px]"><svg width="19" height="17" viewBox="0 0 19 17"><path d="M16 0h3v17h-3zM0 1v15l12-7.500z" fill="#a6c5e6" /></svg>末页</button>
      <PageSep />
      <button type="button" className="ml-2 mr-3 flex items-center gap-[3px] text-[#333]">
        <svg width="24" height="22" viewBox="0 0 24 22"><path d="M5 7V1h14v6" fill="#fff" stroke="#999" strokeWidth="1.500" /><rect x="0" y="7" width="24" height="10" rx="2" fill="#8d8d8d" /><path d="M4 13h16v7H4z" fill="#fff" stroke="#999" strokeWidth="1.500" /></svg>打印
      </button>
      <PageSep />
      <button type="button" className="ml-2 mr-3 flex items-center gap-[3px] text-[#333]">
        <svg width="24" height="24" viewBox="0 0 24 24"><path d="M1 1h18v17l-5 5H1z" fill="#fff" stroke="#777" strokeWidth="1.500" /><path d="M19 18h-5v5" fill="none" stroke="#777" strokeWidth="1.500" /><path d="M7 7h9V3l8 6-8 5v-4H7z" fill="#3cae4f" /></svg>导出
        <Caret className="ml-[6px] text-black" />
      </button>
      <PageSep />
      <button type="button" className="ml-2 flex items-center gap-[3px] text-[#333]">
        <svg width="24" height="18" viewBox="0 0 24 18"><rect width="24" height="18" rx="2" fill="#edaa4e" /><path d="M1 2l11 9L23 2M1 17l8-8M23 17l-8-8" stroke="#fbe6c6" strokeWidth="1.300" fill="none" /></svg>邮件
      </button>
    </div>

    <Report />
  </section>
);

const menuItems = ['文件', '模板', '插入', '单元格'];

const MenuStrip = () => (
  <header className={`flex h-[9px] shrink-0 items-end overflow-hidden bg-[#e0e0e2] text-xs leading-4 text-black ${MONO}`}>
    <div className="flex w-[244px] shrink-0 gap-7 whitespace-nowrap pb-[3px] pl-[13px]">
      {menuItems.map(m => <a key={m} href="#menu">{m}</a>)}
    </div>
    <div className="flex shrink-0 gap-7 whitespace-nowrap pb-[3px] pl-3">
      <a href="#server">服务器</a><a href="#help">帮助</a><a href="#community">社区</a>
    </div>
    <div className="flex min-w-0 flex-1 items-end justify-end">
      <span className="whitespace-nowrap pb-[3px]">日志:年产量:<span className="text-[10px]">20706702 StandingBand ERROR [Standard]</span> 错误代码:<span className="text-[10px]">11300001</span> 数据集配置错误<span className="text-[10px]">csfr300f01 SQL ...</span></span>
      <Search size={13} className="mb-1 ml-3 shrink-0" />
      <Bell size={13} className="mb-1 ml-[14px] shrink-0" />
      <span className="ml-[6px] w-[86px] overflow-hidden whitespace-nowrap bg-[#b7daf4] pb-[3px] pl-[5px]">帆舞学习排行榜</span>
    </div>
  </header>
);

const App: React.FC = () => (
  <div className="relative flex h-screen w-full flex-col overflow-hidden bg-[#f4f4f7] font-['Noto_Sans_CJK_SC',sans-serif]">
    <MenuStrip />
    <div className="flex min-h-0 flex-1">
      <LeftPanel />
      <div className="flex w-[10px] shrink-0 flex-col items-center bg-[#e6e6e6]">
        <svg width="5" height="9" viewBox="0 0 5 9" className="mt-[13px]"><path d="M5 0v9L0 4.500z" fill="#a8a8a8" /></svg>
        <svg width="4" height="7" viewBox="0 0 4 7" className="mt-[475px]"><path d="M.5 0v7M3.500 0v7" stroke="#a8a8a8" /></svg>
      </div>
      <main className="flex min-w-0 flex-1 flex-col">
        <div className="flex shrink-0">
          <div className="flex w-[60px] shrink-0 items-start">
            <Tool label="预览模板" className="ml-[15px] mt-[7px] flex-col gap-[6px] text-[#ababab]">
              <svg width="21" height="29" viewBox="0 0 21 29"><path d="M0 0h21v4H0zM0 7h18l3 3v18H0z" fill="#409bf8" /><path d="M4 12h11M4 17h5M4 22h5" stroke="#fff" strokeWidth="2" /><circle cx="12.500" cy="18.500" r="4.500" fill="#d7e6f7" stroke="#fff" strokeWidth="1.500" /><path d="M16 22l4 4" stroke="#fff" strokeWidth="2.500" /></svg>
              <Caret />
            </Tool>
            <Sep className="ml-[15px] mt-[6px] h-[42px]" />
          </div>
          <div className="min-w-0 flex-1"><MainToolbar /><TabBar /></div>
        </div>
        <FormatBar />
        <RulerArea />
        <div className="h-[10px] shrink-0 bg-[#d9d9db]" />
        <div className="flex min-h-0 flex-1">
          <Sheet />
          <div className="w-4 shrink-0 bg-[#e0e0e0]"><Tool label="向上滚动" className="h-[17px] w-full bg-white"><ChevronUp size={13} /></Tool></div>
        </div>
      </main>
      <RightPanel />
    </div>
    <PreviewWindow />
  </div>
);

export default App;
